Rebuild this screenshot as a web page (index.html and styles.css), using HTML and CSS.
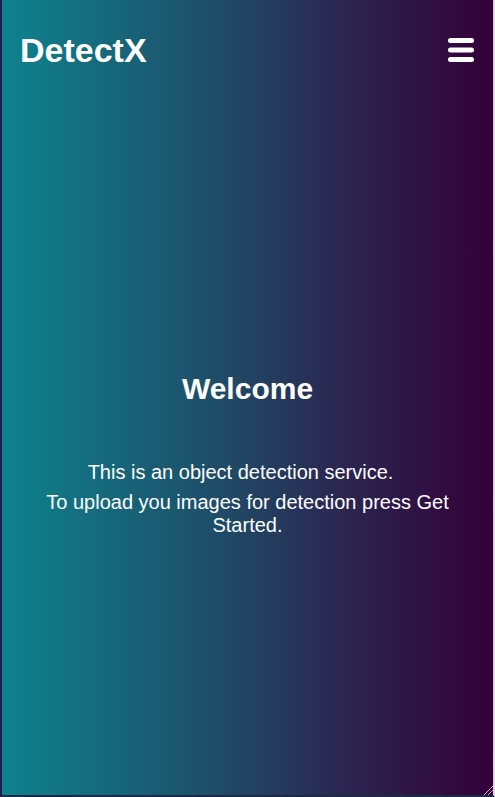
FILE: index.html
```html
<!DOCTYPE html>
<html lang="en">
<head>
<meta charset="utf-8">
<title>DetectX</title>
<link rel="stylesheet" href="styles.css">
</head>
<body>
<div class="frame">
  <header class="topbar">
    <div class="brand">DetectX</div>
    <button class="menu" aria-label="Menu">
      <svg width="26" height="24" viewBox="0 0 26 24">
        <rect x="0" y="0" width="26" height="5" rx="2.5" fill="#fff"/>
        <rect x="0" y="9.5" width="26" height="5" rx="2.5" fill="#fff"/>
        <rect x="0" y="19" width="26" height="5" rx="2.5" fill="#fff"/>
      </svg>
    </button>
  </header>
  <main class="hero">
    <h1 class="title">Welcome</h1>
    <p class="text text-first">This is an object detection service.</p>
    <p class="text">To upload you images for detection press Get Started.</p>
  </main>
  <svg class="grip" width="10" height="10" viewBox="0 0 10 10">
    <line x1="10" y1="1" x2="1" y2="10" stroke="#c9b7cf" stroke-width="1"/>
    <line x1="10" y1="5" x2="5" y2="10" stroke="#c9b7cf" stroke-width="1"/>
  </svg>
</div>
</body>
</html>
```
FILE: styles.css
```css
html, body {
  margin: 0;
  padding: 0;
  height: 100%;
  background: #1d2a45;
}
body {
  font-family: "Liberation Sans", Arial, sans-serif;
  color: #fff;
  overflow: hidden;
}
.frame {
  position: relative;
  box-sizing: border-box;
  width: 495px;
  height: 797px;
  border-left: 2px solid #1c1f4e;
  border-right: 2px solid #e3d3e4;
  border-bottom: 2px solid #1d2a45;
  background: linear-gradient(to right, #0d838d 0%, #1f4b67 45%, #2b2550 70%, #34003a 100%);
  display: flex;
  flex-direction: column;
}
.topbar {
  display: flex;
  justify-content: space-between;
  align-items: flex-start;
  padding: 31px 19px 0 18px;
}
.brand {
  font-size: 34px;
  font-weight: bold;
  line-height: 39px;
}
.menu {
  background: none;
  border: 0;
  padding: 0;
  margin-top: 7px;
  line-height: 0;
}
.hero {
  margin-top: 302px;
  padding: 0 22px;
  text-align: center;
}
.title {
  margin: 0 0 54px 0;
  font-size: 30px;
  font-weight: bold;
  line-height: 34.5px;
}
.text {
  margin: 0 0 7px 0;
  font-size: 20px;
  line-height: 23px;
}
.text-first {
  padding-right: 14px;
}
.grip {
  position: absolute;
  right: 0;
  bottom: 0;
}
```
